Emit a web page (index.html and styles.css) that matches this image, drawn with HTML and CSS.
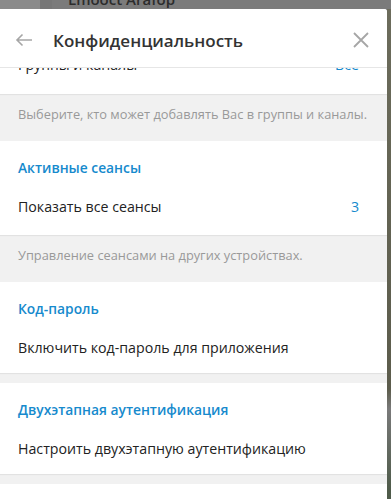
FILE: index.html
```html
<!DOCTYPE html>
<html lang="ru">
<head>
  <meta charset="UTF-8">
  <meta name="viewport" content="width=device-width, initial-scale=1.0">
  <title>Конфиденциальность</title>
  <link rel="stylesheet" href="styles.css">
</head>
<body>
  <!-- dimmed chat window behind the dialog -->
  <div class="backdrop-top">
    <div class="backdrop-side"></div>
    <div class="backdrop-title">Lmooct Arafop</div>
  </div>

  <div class="layout">
    <div class="dialog">
      <header class="dialog-header">
        <button class="icon-btn back" aria-label="Назад">
          <svg width="18" height="14" viewBox="0 0 18 14">
            <path d="M17 7H2M7.5 1.5L2 7l5.5 5.5" fill="none" stroke="#a6a6a6" stroke-width="1.6"/>
          </svg>
        </button>
        <h1 class="dialog-title">Конфиденциальность</h1>
        <button class="icon-btn close" aria-label="Закрыть">
          <svg width="16" height="16" viewBox="0 0 16 16">
            <path d="M1 1l14 14M15 1L1 15" fill="none" stroke="#a6a6a6" stroke-width="1.8"/>
          </svg>
        </button>
      </header>

      <div class="dialog-body">
        <section class="card card-cut">
          <div class="row">
            <span>Группы и каналы</span>
            <span class="value">Все</span>
          </div>
        </section>
        <p class="note">Выберите, кто может добавлять Вас в группы и каналы.</p>

        <section class="card card-tall">
          <h2 class="card-label">Активные сеансы</h2>
          <div class="row">
            <span>Показать все сеансы</span>
            <span class="value">3</span>
          </div>
        </section>
        <p class="note">Управление сеансами на других устройствах.</p>

        <section class="card">
          <h2 class="card-label">Код-пароль</h2>
          <div class="row">
            <span>Включить код-пароль для приложения</span>
          </div>
        </section>
        <div class="gap"></div>

        <section class="card">
          <h2 class="card-label">Двухэтапная аутентификация</h2>
          <div class="row">
            <span>Настроить двухэтапную аутентификацию</span>
          </div>
        </section>
        <div class="gap"></div>

        <section class="card card-empty"></section>
      </div>
    </div>
    <div class="backdrop-right"></div>
  </div>
</body>
</html>
```

FILE: styles.css
```css
body {
  margin: 0;
  height: 499px;
  overflow: hidden;
  font-family: "Open Sans", "DejaVu Sans", sans-serif;
  background-color: #7b7b7b;
}

/* Backdrop */
.backdrop-top {
  height: 9px;
  display: flex;
  overflow: hidden;
  background-color: #7b7b7b;
}

.backdrop-side {
  width: 40px;
  background-color: #8a8a8a;
  border-right: 12px solid #777;
}

.backdrop-title {
  margin-left: 16px;
  margin-top: -9px;
  font-size: 15px;
  font-weight: 600;
  line-height: 16px;
  color: #2c2c2c;
}

.layout {
  display: flex;
  height: 490px;
}

.backdrop-right {
  flex: 1;
  background: linear-gradient(#6c6c5c 0, #5c5c4c 380px, #7a7a7a 400px, #4f5b4a 480px);
}

/* Dialog */
.dialog {
  width: 387px;
  background-color: #fff;
  border-top-right-radius: 3px;
  display: flex;
  flex-direction: column;
  overflow: hidden;
}

.dialog-header {
  flex-shrink: 0;
  height: 58px;
  display: flex;
  align-items: center;
  padding: 0 14px 0 15px;
  position: relative;
  z-index: 1;
  background-color: #fff;
  border-bottom: 1px solid #e6e6e6;
}

.icon-btn {
  background: none;
  border: none;
  padding: 0;
  display: flex;
  cursor: pointer;
}

.back {
  margin-top: 4px;
}

.close {
  margin-left: auto;
  margin-right: 4px;
  margin-top: 4px;
}

.dialog-title {
  margin: 4px 0 0 20px;
  font-size: 17px;
  font-weight: 600;
  color: #333;
}

.dialog-body {
  flex: 1;
  min-height: 0;
  overflow: hidden;
  background-color: #f1f1f1;
}

.card {
  background-color: #fff;
  padding: 7px 0 8px;
  box-shadow: 0 1px 1px rgba(0, 0, 0, 0.06);
}

.card-cut {
  margin-top: -22px;
  padding: 0 0 12px;
}

.card-tall {
  padding-bottom: 11px;
}

.card-empty {
  height: 60px;
}

.card-label {
  margin: 0;
  padding: 0 18px;
  height: 40px;
  line-height: 40px;
  font-size: 13.8px;
  font-weight: 600;
  color: #168acd;
}

.row {
  height: 36px;
  display: flex;
  align-items: center;
  justify-content: space-between;
  padding: 0 28px 0 18px;
  font-size: 14.2px;
  color: #222;
}

.value {
  color: #168acd;
}

.note {
  margin: 0;
  padding: 10px 18px 17px;
  line-height: 20px;
  font-size: 12.8px;
  color: #999;
}

.gap {
  height: 10px;
}
```
